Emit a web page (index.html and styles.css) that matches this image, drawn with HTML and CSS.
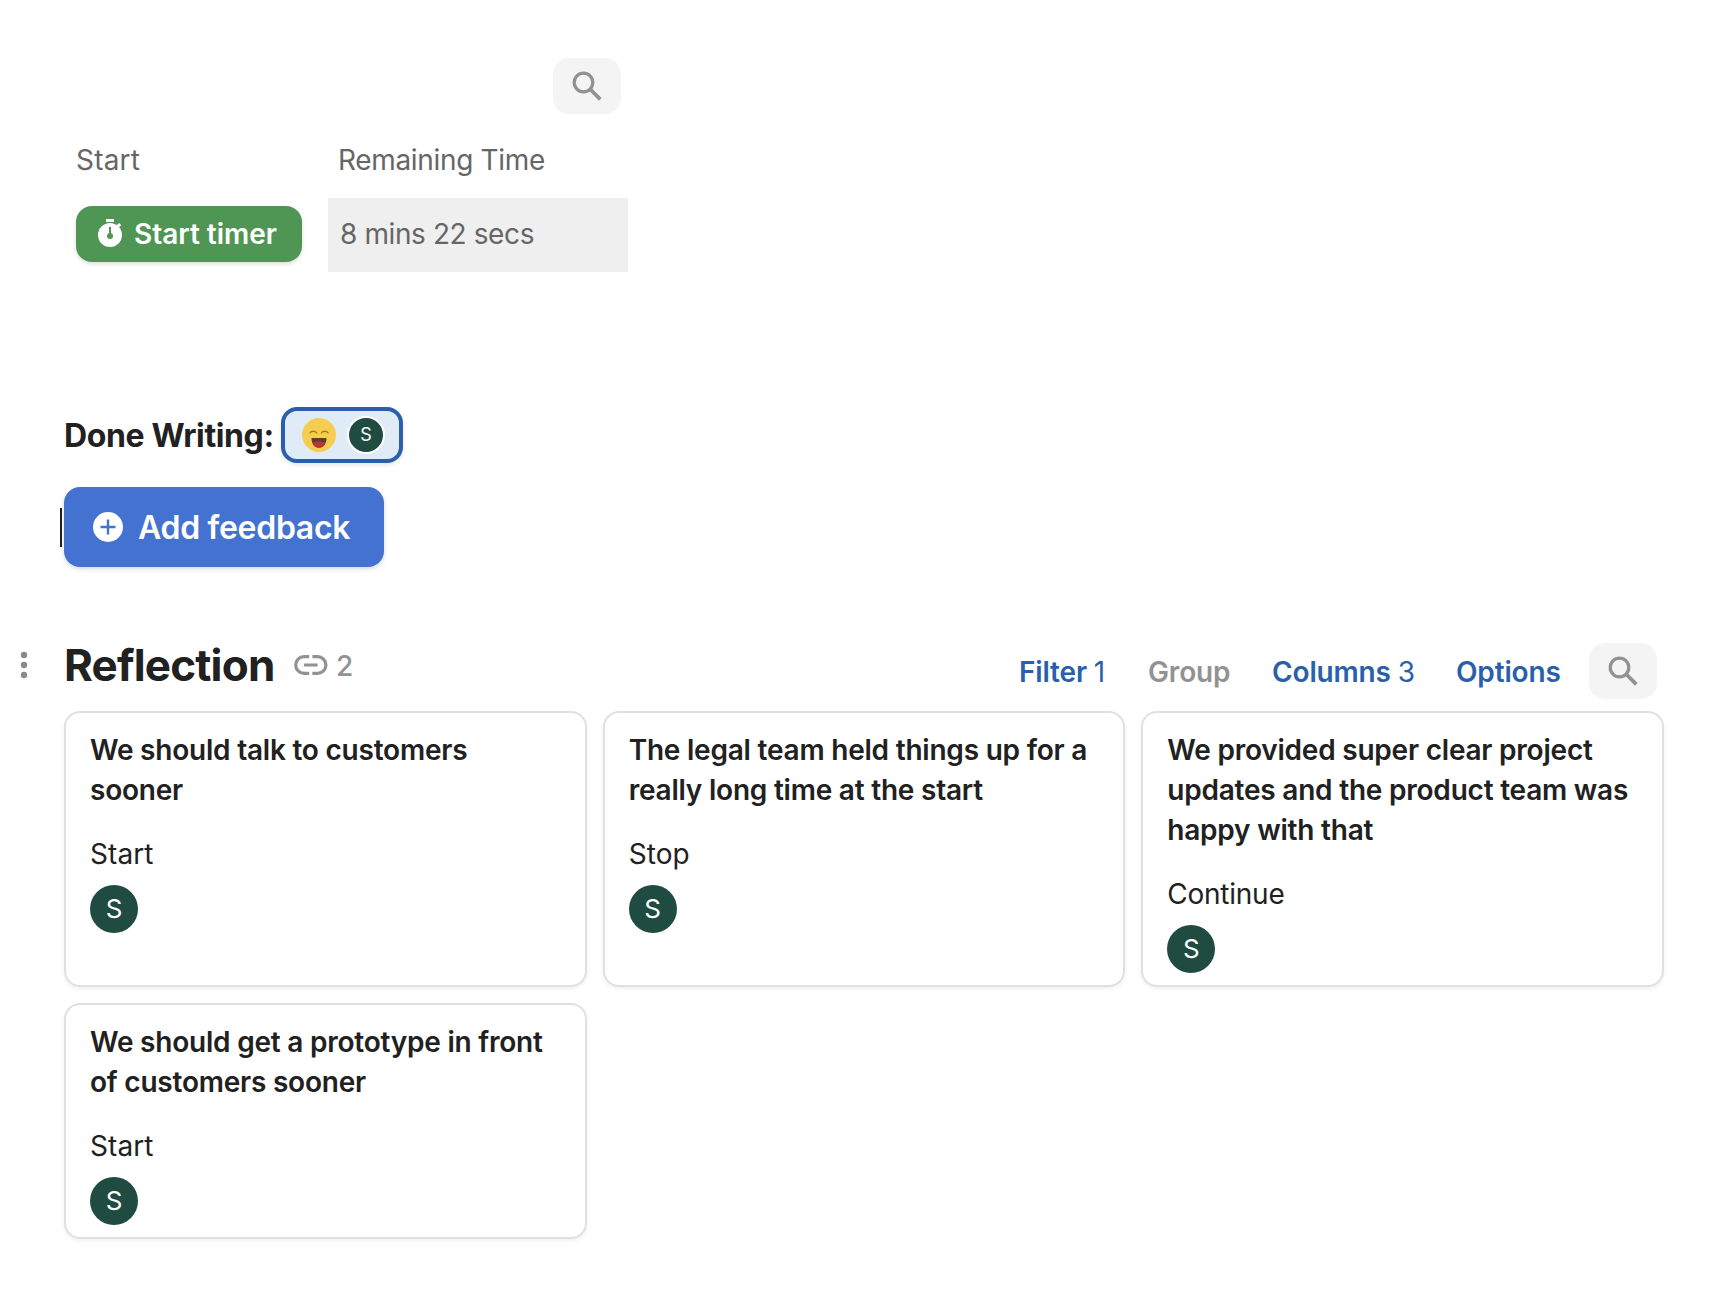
FILE: index.html
```html
<!DOCTYPE html>
<html lang="en">
<head>
<meta charset="utf-8">
<title>Reflection</title>
<link rel="stylesheet" href="styles.css">
</head>
<body>
<svg class="defs" width="0" height="0">
  <symbol id="search" viewBox="0 0 30 30"><circle cx="11.500" cy="11.500" r="9.300" fill="none" stroke="currentColor" stroke-width="3.200"/><path d="M18 18 L28.300 28.300" stroke="currentColor" stroke-width="3.800" fill="none"/></symbol>
</svg>
<main class="page">
  <section class="timer">
    <div class="timer-tools"><button class="search"><svg class="search-icon"><use href="#search"/></svg></button></div>
    <div class="timer-grid">
      <div class="label label-start">Start</div>
      <div class="label label-time">Remaining Time</div>
      <div class="timer-action">
        <button class="start">
          <svg class="stopwatch" viewBox="0 0 24 28"><path d="M8 0h8v3H8z" fill="#fff"/><path d="M18 7.500 22.200 3.800" transform="translate(0 1.400)" stroke="#fff" stroke-width="3"/><circle cx="12" cy="16" r="12" fill="#fff"/><path d="M12 8v9" stroke="#4f9654" stroke-width="2"/><circle cx="12" cy="17" r="3" fill="#4f9654"/></svg>
          <span>Start timer</span>
        </button>
      </div>
      <div class="time">8 mins 22 secs</div>
    </div>
  </section>

  <section class="done">
    <span class="done-label">Done Writing:</span>
    <button class="reaction">
      <svg class="emoji" viewBox="0 0 34 34"><circle cx="17" cy="17" r="17" fill="#f7cd51"/><path d="M8 15c1-2.400 5.600-2.400 6.600 0M19.400 15c1-2.400 5.600-2.400 6.600 0" fill="none" stroke="#b27a28" stroke-width="1.400" stroke-linecap="round"/><path d="M9.500 20h15c0 6-3 9.800-7.500 9.800S9.500 26 9.500 20z" fill="#5f4030"/><path d="M10.900 25.200c1.800-1.900 10.400-1.900 12.200 0-1.200 3-3.400 4.600-6.100 4.600s-4.900-1.600-6.100-4.600z" fill="#bd3430"/></svg>
      <span class="avatar avatar-small">S</span>
    </button>
  </section>

  <section class="feedback">
    <span class="caret"></span>
    <button class="add">
      <svg class="plus" viewBox="0 0 30 30"><circle cx="15" cy="15" r="15" fill="#fff"/><path d="M15 7.500v15M7.500 15h15" stroke="#4472d0" stroke-width="2.400"/></svg>
      <span>Add feedback</span>
    </button>
  </section>

  <header class="table-head">
    <svg class="dots" viewBox="0 0 8 28"><circle cx="4" cy="4" r="3.200"/><circle cx="4" cy="14" r="3.200"/><circle cx="4" cy="24" r="3.200"/></svg>
    <h1>Reflection</h1>
    <svg class="link" viewBox="0 0 34 20"><path d="M15.200 1.700H10a8.300 8.300 0 0 0 0 16.600h5.200M18.400 1.700h5.200a8.300 8.300 0 0 1 0 16.600h-5.200M10 10h13.600" fill="none" stroke="#929292" stroke-width="3.200"/></svg>
    <span class="count">2</span>
    <nav class="tools">
      <a class="filter">Filter <span>1</span></a>
      <a class="group">Group</a>
      <a class="columns">Columns <span>3</span></a>
      <a class="options">Options</a>
      <button class="search"><svg class="search-icon"><use href="#search"/></svg></button>
    </nav>
  </header>

  <section class="cards">
    <article class="card"><h2>We should talk to customers sooner</h2><p>Start</p><span class="avatar">S</span></article>
    <article class="card"><h2>The legal team held things up for a really long time at the start</h2><p>Stop</p><span class="avatar">S</span></article>
    <article class="card"><h2>We provided super clear project updates and the product team was happy with that</h2><p class="long">Continue</p><span class="avatar">S</span></article>
    <article class="card"><h2>We should get a prototype in front of customers sooner</h2><p>Start</p><span class="avatar">S</span></article>
  </section>
</main>
</body>
</html>
```
FILE: styles.css
```css
* { box-sizing: border-box; }
body { margin: 0; background: #fff; color: #212121; font: 400 28px/40px Inter, sans-serif; }
button { border: 0; margin: 0; padding: 0; font: inherit; color: inherit; display: flex; align-items: center; }
svg { display: block; flex: none; }
h1, h2, p { margin: 0; }
.defs { position: absolute; }
.page { width: 1718px; height: 1316px; padding: 58px 54px 0 64px; overflow: hidden; }

.search { width: 68px; height: 56px; border-radius: 16px; background: #f4f4f4; color: #929292; justify-content: center; }
.search-icon { width: 30px; height: 30px; }

.timer { width: 564px; height: 349px; }
.timer-tools { display: flex; justify-content: flex-end; padding-right: 7px; height: 82px; }
.timer-grid { display: grid; grid-template-columns: 264px 300px; grid-template-rows: 58px 74px; color: #666; }
.label { padding-left: 12px; }
.label-start { letter-spacing: .2px; }
.label-time { padding-left: 10px; letter-spacing: -.33px; }
.timer-action { padding: 8px 0 0 12px; }
.start { width: 226px; height: 56px; border-radius: 16px; padding-left: 22px; gap: 12px; background: #4f9654; color: #fff; font-weight: 600; box-shadow: 0 2px 4px rgba(0,0,0,.14); white-space: nowrap; }
.stopwatch { width: 24px; height: 28px; margin-top: -2px; }
.time { background: #efefef; padding: 16px 0 0 12px; letter-spacing: -.4px; white-space: nowrap; }

.done { display: flex; align-items: center; height: 56px; margin-bottom: 24px; }
.done-label { width: 217px; padding-top: 2px; font-size: 32px; font-weight: 700; letter-spacing: -.37px; white-space: nowrap; }
.reaction { width: 122px; height: 56px; border: 4px solid #2a5fad; border-radius: 16px; background: #dfecf7; padding-left: 17px; gap: 11px; box-shadow: 0 2px 4px rgba(0,0,0,.1); }
.emoji { width: 34px; height: 34px; }

.avatar { display: flex; align-items: center; justify-content: center; width: 48px; height: 48px; border-radius: 50%; background: #1f4b40; color: #fff; font-size: 26px; line-height: 1; }
.avatar-small { width: 38px; height: 38px; border: 2px solid #fff; font-size: 18px; }

.feedback { display: flex; align-items: center; margin-left: -4px; height: 80px; }
.caret { width: 2px; height: 39px; margin-right: 2px; background: #212121; }
.add { width: 320px; height: 80px; border-radius: 16px; padding-left: 29px; gap: 15px; background: #4472d0; color: #fff; font-size: 32px; font-weight: 600; letter-spacing: -.3px; box-shadow: 0 2px 4px rgba(0,0,0,.16); white-space: nowrap; }
.add span { padding-top: 2px; }
.plus { width: 30px; height: 30px; }

.table-head { display: flex; align-items: flex-start; height: 68px; margin: 76px 0 0 -44px; }
.dots { width: 8px; height: 28px; margin: 8px 36px 0 0; fill: #8a8a8a; }
h1 { width: 230px; font-size: 44px; line-height: 44px; font-weight: 700; letter-spacing: -.8px; white-space: nowrap; }
.link { width: 34px; height: 20px; margin-top: 12px; }
.count { margin: 3px 0 0 8px; color: #929292; font-weight: 500; }
.tools { display: flex; margin-left: auto; padding-right: 7px; color: #2a5fad; font-weight: 600; letter-spacing: -.15px; white-space: nowrap; }
.tools a { padding-top: 9px; }
.tools span { font-weight: 400; }
.filter { width: 129px; }
.group { width: 124px; color: #929292; }
.columns { width: 184px; }
.options { width: 133px; }

.cards { display: grid; grid-template-columns: repeat(3, 1fr); gap: 16px; width: 1600px; }
.card { border: 2px solid #e0e0e0; border-radius: 16px; padding: 17px 24px 12px; box-shadow: 0 2px 4px rgba(0,0,0,.06); }
.card h2 { font-size: 28px; line-height: 40px; font-weight: 600; letter-spacing: -.22px; margin-bottom: 24px; }
.card p { margin-bottom: 11px; letter-spacing: .1px; }
.card .long { letter-spacing: -.25px; }
```
